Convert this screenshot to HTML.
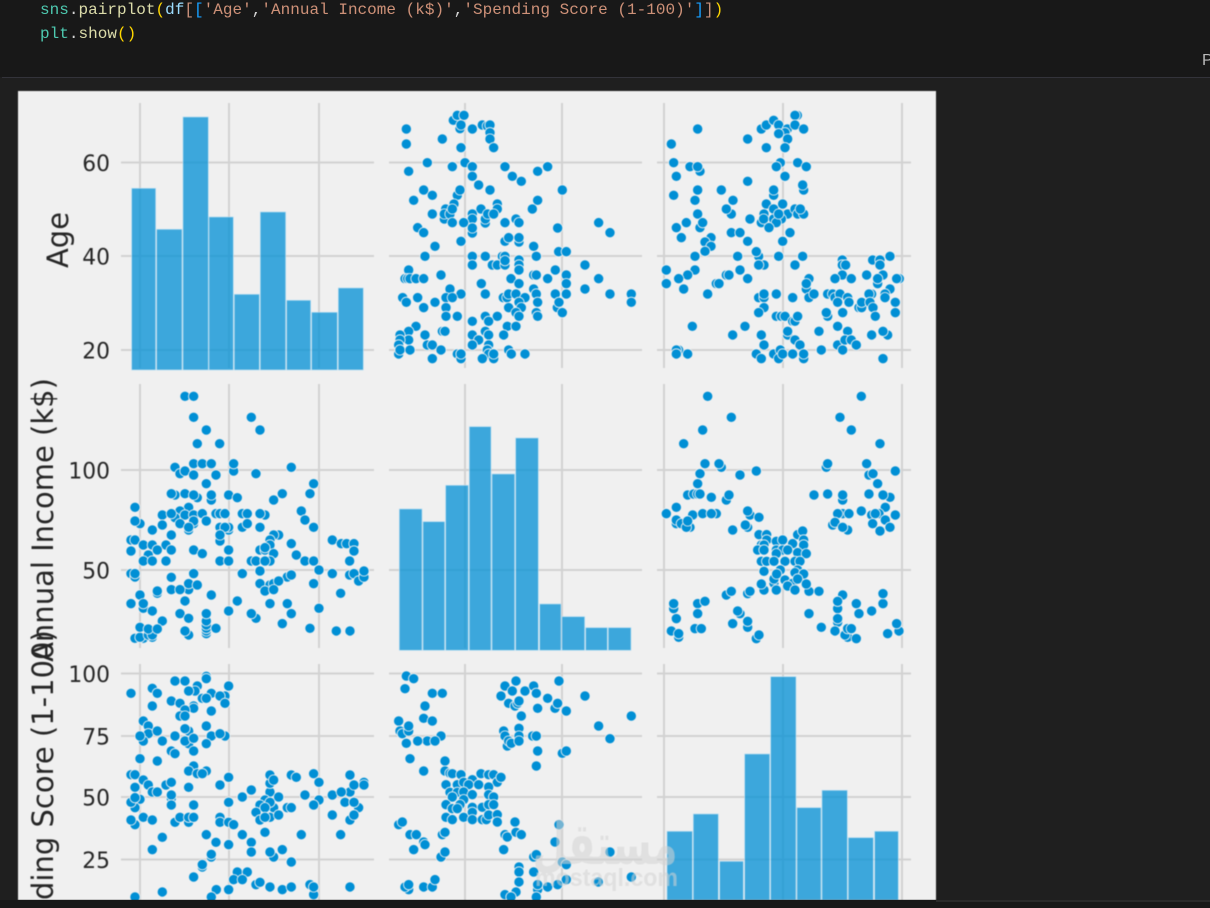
<!DOCTYPE html>
<html>
<head>
<meta charset="utf-8">
<style>
html,body{margin:0;padding:0;width:1210px;height:908px;overflow:hidden;background:#1f1f1f}
#top{position:absolute;left:0;top:0;width:1210px;height:77px;background:#181818}
#rule{position:absolute;left:2px;top:77px;width:1208px;height:1px;background:#33333a}
pre{position:absolute;left:40px;margin:0;font:16px/24px "Liberation Mono",monospace;letter-spacing:.02px;color:#d4d4d4;white-space:pre}
.t{color:#4ec9b0}.f{color:#dcdcaa}.g{color:#ffd700}.v{color:#9cdcfe}.s{color:#ce9178}.o{color:#c9907a}.b{color:#179fff}
#p{position:absolute;left:1202px;top:52px;width:8px;height:20px;overflow:hidden;font:16px "Liberation Sans",sans-serif;color:#bbb}
#bottom{position:absolute;left:0;top:900px;width:1210px;height:8px;background:#181818}
#line{position:absolute;left:936px;top:900px;width:274px;height:2px;background:#2a2a2a}
svg{position:absolute;left:0;top:0;filter:blur(.45px)}
circle{r:15.4px;fill:#008fd5;stroke:#f0f0f0;stroke-width:2.5px}
.lab{font-family:"DejaVu Sans",sans-serif;fill:#262626}
.tick{font-size:21.8px;text-anchor:end}
.yl{font-size:29px;text-anchor:middle}
.grid line{stroke:#d2d2d2;stroke-width:2}
.hist rect{fill:rgba(0,143,213,.75);stroke:#b5dcf1;stroke-width:2}
</style>
</head>
<body>
<div id="top"></div>
<div id="rule"></div>
<pre style="top:-2px"><span class="t">sns</span>.<span class="f">pairplot</span><span class="g">(</span><span class="v">df</span><span class="o">[</span><span class="b">[</span><span class="s">'Age'</span>,<span class="s">'Annual Income (k$)'</span>,<span class="s">'Spending Score (1-100)'</span><span class="b">]</span><span class="o">]</span><span class="g">)</span></pre>
<pre style="top:22px"><span class="t">plt</span>.<span class="f">show</span><span class="g">()</span></pre>
<div id="p">P</div>
<svg width="1210" height="908" viewBox="0 0 1210 908" xmlns="http://www.w3.org/2000/svg">
<defs><clipPath id="fc"><rect x="18" y="91" width="918" height="809"/></clipPath></defs>
<g clip-path="url(#fc)">
<rect x="18" y="91" width="918" height="809" fill="#f0f0f0"/>
<g class="grid">
<line x1="121" x2="374" y1="162.500" y2="162.500"/><line x1="121" x2="374" y1="256" y2="256"/><line x1="121" x2="374" y1="350" y2="350"/>
<line x1="389" x2="642" y1="162.500" y2="162.500"/><line x1="389" x2="642" y1="256" y2="256"/><line x1="389" x2="642" y1="350" y2="350"/>
<line x1="657" x2="911" y1="162.500" y2="162.500"/><line x1="657" x2="911" y1="256" y2="256"/><line x1="657" x2="911" y1="350" y2="350"/>
<line x1="121" x2="374" y1="470" y2="470"/><line x1="121" x2="374" y1="570" y2="570"/>
<line x1="389" x2="642" y1="470" y2="470"/><line x1="389" x2="642" y1="570" y2="570"/>
<line x1="657" x2="911" y1="470" y2="470"/><line x1="657" x2="911" y1="570" y2="570"/>
<line x1="121" x2="374" y1="673.500" y2="673.500"/><line x1="121" x2="374" y1="736" y2="736"/><line x1="121" x2="374" y1="797" y2="797"/><line x1="121" x2="374" y1="859.500" y2="859.500"/>
<line x1="389" x2="642" y1="673.500" y2="673.500"/><line x1="389" x2="642" y1="736" y2="736"/><line x1="389" x2="642" y1="797" y2="797"/><line x1="389" x2="642" y1="859.500" y2="859.500"/>
<line x1="657" x2="911" y1="673.500" y2="673.500"/><line x1="657" x2="911" y1="736" y2="736"/><line x1="657" x2="911" y1="797" y2="797"/><line x1="657" x2="911" y1="859.500" y2="859.500"/>
<line y1="103" y2="368" x1="140" x2="140"/><line y1="103" y2="368" x1="229" x2="229"/><line y1="103" y2="368" x1="319" x2="319"/>
<line y1="103" y2="368" x1="465" x2="465"/><line y1="103" y2="368" x1="562" x2="562"/>
<line y1="103" y2="368" x1="664" x2="664"/><line y1="103" y2="368" x1="783" x2="783"/><line y1="103" y2="368" x1="902" x2="902"/>
<line y1="384" y2="648" x1="140" x2="140"/><line y1="384" y2="648" x1="229" x2="229"/><line y1="384" y2="648" x1="319" x2="319"/>
<line y1="384" y2="648" x1="465" x2="465"/><line y1="384" y2="648" x1="562" x2="562"/>
<line y1="384" y2="648" x1="664" x2="664"/><line y1="384" y2="648" x1="783" x2="783"/><line y1="384" y2="648" x1="902" x2="902"/>
<line y1="664" y2="900" x1="140" x2="140"/><line y1="664" y2="900" x1="229" x2="229"/><line y1="664" y2="900" x1="319" x2="319"/>
<line y1="664" y2="900" x1="465" x2="465"/><line y1="664" y2="900" x1="562" x2="562"/>
<line y1="664" y2="900" x1="664" x2="664"/><line y1="664" y2="900" x1="783" x2="783"/><line y1="664" y2="900" x1="902" x2="902"/>
</g>

<g class="hist" transform="scale(.3333)">
<rect x="395" y="565" width="72" height="545"/><rect x="470" y="688" width="76" height="422"/><rect x="549" y="351" width="76" height="759"/><rect x="627" y="651" width="73" height="459"/><rect x="703" y="883" width="75" height="227"/><rect x="781" y="636" width="76" height="474"/><rect x="860" y="901" width="72" height="209"/><rect x="935" y="937" width="77" height="173"/><rect x="1015" y="864" width="75" height="246"/>
</g>
<g class="hist" transform="translate(380 380) scale(.3333)">
<rect x="58" y="387" width="68" height="424"/><rect x="129" y="425" width="65" height="386"/><rect x="197" y="316" width="68" height="495"/><rect x="268" y="140" width="65" height="671"/><rect x="336" y="282" width="68" height="529"/><rect x="407" y="174" width="68" height="637"/><rect x="479" y="672" width="64" height="139"/><rect x="546" y="710" width="68" height="101"/><rect x="617" y="743" width="65" height="68"/><rect x="685" y="743" width="68" height="68"/>
</g>
<g class="hist" transform="translate(650 655) scale(.3333)">
<rect x="51" y="529" width="76" height="206"/><rect x="130" y="477" width="75" height="258"/><rect x="209" y="619" width="71" height="116"/><rect x="284" y="297" width="75" height="438"/><rect x="362" y="65" width="76" height="670"/><rect x="441" y="458" width="72" height="277"/><rect x="516" y="406" width="76" height="329"/><rect x="595" y="548" width="75" height="187"/><rect x="674" y="529" width="71" height="206"/>
</g>

<g transform="translate(380 90) scale(.3333)">
<circle cx=220 cy=91 /><circle cx=232 cy=76 /><circle cx=240 cy=116 /><circle cx=243 cy=105 /><circle cx=252 cy=76 /><circle cx=79 cy=117 /><circle cx=79 cy=162 /><circle cx=187 cy=147 /><circle cx=243 cy=173 /><circle cx=277 cy=117 /><circle cx=307 cy=105 /><circle cx=322 cy=108 /><circle cx=330 cy=105 /><circle cx=330 cy=128 /><circle cx=330 cy=147 /><circle cx=341 cy=173 /><circle cx=142 cy=218 /><circle cx=217 cy=230 /><circle cx=86 cy=244 /><circle cx=255 cy=218 /><circle cx=277 cy=230 /><circle cx=375 cy=230 /><circle cx=473 cy=244 /><circle cx=503 cy=230 /><circle cx=277 cy=259 /><circle cx=397 cy=259 /><circle cx=424 cy=274 /><circle cx=296 cy=285 /><circle cx=330 cy=300 /><circle cx=547 cy=300 /><circle cx=131 cy=300 /><circle cx=157 cy=316 /><circle cx=232 cy=316 /><circle cx=240 cy=300 /><circle cx=101 cy=331 /><circle cx=473 cy=331 /><circle cx=222 cy=342 /><circle cx=352 cy=342 /><circle cx=352 cy=357 /><circle cx=303 cy=357 /><circle cx=457 cy=357 /><circle cx=197 cy=357 /><circle cx=193 cy=387 /><circle cx=193 cy=372 /><circle cx=210 cy=372 /><circle cx=217 cy=357 /><circle cx=157 cy=372 /><circle cx=277 cy=372 /><circle cx=277 cy=387 /><circle cx=316 cy=399 /><circle cx=316 cy=387 /><circle cx=323 cy=372 /><circle cx=341 cy=372 /><circle cx=217 cy=398 /><circle cx=251 cy=398 /><circle cx=375 cy=398 /><circle cx=408 cy=387 /><circle cx=417 cy=398 /><circle cx=277 cy=429 /><circle cx=277 cy=414 /><circle cx=113 cy=413 /><circle cx=131 cy=428 /><circle cx=533 cy=414 /><circle cx=656 cy=398 /><circle cx=690 cy=428 /><circle cx=243 cy=454 /><circle cx=375 cy=454 /><circle cx=386 cy=443 /><circle cx=417 cy=456 /><circle cx=417 cy=443 /><circle cx=165 cy=469 /><circle cx=461 cy=469 /><circle cx=135 cy=499 /><circle cx=277 cy=499 /><circle cx=316 cy=499 /><circle cx=367 cy=499 /><circle cx=375 cy=499 /><circle cx=469 cy=499 /><circle cx=536 cy=485 /><circle cx=559 cy=485 /><circle cx=277 cy=525 /><circle cx=337 cy=525 /><circle cx=352 cy=525 /><circle cx=375 cy=525 /><circle cx=375 cy=512 /><circle cx=417 cy=510 /><circle cx=417 cy=525 /><circle cx=417 cy=540 /><circle cx=615 cy=525 /><circle cx=526 cy=540 /><circle cx=86 cy=540 /><circle cx=75 cy=566 /><circle cx=83 cy=566 /><circle cx=90 cy=566 /><circle cx=108 cy=566 /><circle cx=131 cy=566 /><circle cx=183 cy=555 /><circle cx=393 cy=566 /><circle cx=461 cy=555 /><circle cx=469 cy=555 /><circle cx=503 cy=566 /><circle cx=559 cy=555 /><circle cx=559 cy=581 /><circle cx=656 cy=566 /><circle cx=304 cy=581 /><circle cx=417 cy=581 /><circle cx=210 cy=597 /><circle cx=461 cy=597 /><circle cx=615 cy=597 /><circle cx=243 cy=612 /><circle cx=316 cy=612 /><circle cx=198 cy=623 /><circle cx=217 cy=623 /><circle cx=68 cy=623 /><circle cx=79 cy=637 /><circle cx=113 cy=623 /><circle cx=165 cy=637 /><circle cx=131 cy=653 /><circle cx=198 cy=653 /><circle cx=370 cy=623 /><circle cx=381 cy=623 /><circle cx=386 cy=612 /><circle cx=408 cy=612 /><circle cx=435 cy=623 /><circle cx=469 cy=612 /><circle cx=526 cy=612 /><circle cx=559 cy=612 /><circle cx=690 cy=612 /><circle cx=754 cy=612 /><circle cx=754 cy=637 /><circle cx=473 cy=637 /><circle cx=532 cy=653 /><circle cx=537 cy=637 /><circle cx=547 cy=668 /><circle cx=417 cy=637 /><circle cx=386 cy=653 /><circle cx=424 cy=653 /><circle cx=408 cy=668 /><circle cx=417 cy=679 /><circle cx=469 cy=668 /><circle cx=473 cy=679 /><circle cx=198 cy=679 /><circle cx=232 cy=679 /><circle cx=316 cy=679 /><circle cx=352 cy=679 /><circle cx=326 cy=694 /><circle cx=277 cy=694 /><circle cx=108 cy=709 /><circle cx=382 cy=709 /><circle cx=408 cy=709 /><circle cx=86 cy=724 /><circle cx=187 cy=724 /><circle cx=195 cy=724 /><circle cx=316 cy=724 /><circle cx=60 cy=735 /><circle cx=135 cy=735 /><circle cx=277 cy=735 /><circle cx=326 cy=735 /><circle cx=371 cy=735 /><circle cx=86 cy=750 /><circle cx=296 cy=750 /><circle cx=60 cy=750 /><circle cx=56 cy=765 /><circle cx=142 cy=765 /><circle cx=157 cy=765 /><circle cx=277 cy=765 /><circle cx=326 cy=765 /><circle cx=56 cy=792 /><circle cx=60 cy=780 /><circle cx=90 cy=780 /><circle cx=183 cy=780 /><circle cx=386 cy=780 /><circle cx=322 cy=780 /><circle cx=232 cy=792 /><circle cx=243 cy=806 /><circle cx=243 cy=792 /><circle cx=394 cy=792 /><circle cx=435 cy=792 /><circle cx=326 cy=792 /><circle cx=341 cy=806 /><circle cx=341 cy=792 /><circle cx=157 cy=806 /><circle cx=307 cy=806 />
</g>

<g transform="translate(650 90) scale(.3333)">
<circle cx=143 cy=117 /><circle cx=64 cy=162 /><circle cx=293 cy=147 /><circle cx=334 cy=117 /><circle cx=349 cy=105 /><circle cx=371 cy=91 /><circle cx=386 cy=105 /><circle cx=412 cy=117 /><circle cx=405 cy=128 /><circle cx=386 cy=131 /><circle cx=413 cy=147 /><circle cx=442 cy=76 /><circle cx=435 cy=76 /><circle cx=435 cy=105 /><circle cx=461 cy=117 /><circle cx=349 cy=173 /><circle cx=405 cy=173 /><circle cx=71 cy=218 /><circle cx=120 cy=230 /><circle cx=150 cy=244 /><circle cx=143 cy=230 /><circle cx=79 cy=259 /><circle cx=391 cy=218 /><circle cx=379 cy=230 /><circle cx=443 cy=218 /><circle cx=469 cy=230 /><circle cx=405 cy=259 /><circle cx=293 cy=274 /><circle cx=461 cy=300 /><circle cx=458 cy=285 /><circle cx=143 cy=300 /><circle cx=214 cy=300 /><circle cx=71 cy=316 /><circle cx=135 cy=331 /><circle cx=249 cy=331 /><circle cx=371 cy=316 /><circle cx=371 cy=300 /><circle cx=349 cy=342 /><circle cx=398 cy=342 /><circle cx=244 cy=372 /><circle cx=229 cy=357 /><circle cx=143 cy=372 /><circle cx=342 cy=372 /><circle cx=371 cy=357 /><circle cx=413 cy=372 /><circle cx=435 cy=357 /><circle cx=443 cy=372 /><circle cx=461 cy=372 /><circle cx=451 cy=357 /><circle cx=300 cy=387 /><circle cx=334 cy=398 /><circle cx=341 cy=387 /><circle cx=371 cy=387 /><circle cx=394 cy=387 /><circle cx=379 cy=398 /><circle cx=386 cy=372 /><circle cx=357 cy=413 /><circle cx=150 cy=413 /><circle cx=158 cy=398 /><circle cx=109 cy=398 /><circle cx=79 cy=413 /><circle cx=94 cy=443 /><circle cx=244 cy=428 /><circle cx=270 cy=428 /><circle cx=420 cy=428 /><circle cx=183 cy=443 /><circle cx=165 cy=456 /><circle cx=183 cy=469 /><circle cx=165 cy=484 /><circle cx=293 cy=454 /><circle cx=398 cy=454 /><circle cx=135 cy=499 /><circle cx=263 cy=499 /><circle cx=326 cy=499 /><circle cx=319 cy=485 /><circle cx=386 cy=499 /><circle cx=458 cy=499 /><circle cx=342 cy=525 /><circle cx=326 cy=525 /><circle cx=435 cy=525 /><circle cx=577 cy=510 /><circle cx=577 cy=525 /><circle cx=587 cy=525 /><circle cx=668 cy=510 /><circle cx=690 cy=510 /><circle cx=690 cy=525 /><circle cx=720 cy=499 /><circle cx=49 cy=540 /><circle cx=135 cy=540 /><circle cx=270 cy=540 /><circle cx=113 cy=555 /><circle cx=86 cy=566 /><circle cx=229 cy=555 /><circle cx=237 cy=555 /><circle cx=293 cy=566 /><circle cx=577 cy=555 /><circle cx=555 cy=566 /><circle cx=604 cy=566 /><circle cx=650 cy=555 /><circle cx=699 cy=555 /><circle cx=683 cy=581 /><circle cx=683 cy=566 /><circle cx=748 cy=566 /><circle cx=740 cy=566 /><circle cx=477 cy=566 /><circle cx=469 cy=597 /><circle cx=469 cy=581 /><circle cx=49 cy=581 /><circle cx=101 cy=597 /><circle cx=199 cy=581 /><circle cx=207 cy=581 /><circle cx=173 cy=612 /><circle cx=326 cy=623 /><circle cx=342 cy=623 /><circle cx=342 cy=612 /><circle cx=379 cy=612 /><circle cx=428 cy=623 /><circle cx=477 cy=623 /><circle cx=492 cy=612 /><circle cx=533 cy=612 /><circle cx=548 cy=612 /><circle cx=555 cy=623 /><circle cx=570 cy=612 /><circle cx=563 cy=637 /><circle cx=593 cy=623 /><circle cx=597 cy=637 /><circle cx=665 cy=612 /><circle cx=657 cy=612 /><circle cx=720 cy=597 /><circle cx=705 cy=612 /><circle cx=705 cy=623 /><circle cx=736 cy=637 /><circle cx=627 cy=653 /><circle cx=635 cy=653 /><circle cx=635 cy=637 /><circle cx=660 cy=637 /><circle cx=669 cy=653 /><circle cx=342 cy=653 /><circle cx=326 cy=668 /><circle cx=379 cy=679 /><circle cx=394 cy=679 /><circle cx=405 cy=679 /><circle cx=428 cy=694 /><circle cx=435 cy=694 /><circle cx=443 cy=679 /><circle cx=533 cy=679 /><circle cx=529 cy=668 /><circle cx=578 cy=668 /><circle cx=676 cy=679 /><circle cx=736 cy=668 /><circle cx=127 cy=709 /><circle cx=285 cy=709 /><circle cx=413 cy=735 /><circle cx=413 cy=724 /><circle cx=507 cy=724 /><circle cx=563 cy=709 /><circle cx=593 cy=724 /><circle cx=713 cy=735 /><circle cx=699 cy=724 /><circle cx=665 cy=735 /><circle cx=248 cy=735 /><circle cx=334 cy=735 /><circle cx=435 cy=750 /><circle cx=450 cy=765 /><circle cx=342 cy=765 /><circle cx=563 cy=765 /><circle cx=585 cy=750 /><circle cx=604 cy=750 /><circle cx=619 cy=765 /><circle cx=514 cy=780 /><circle cx=578 cy=780 /><circle cx=86 cy=780 /><circle cx=79 cy=780 /><circle cx=79 cy=792 /><circle cx=113 cy=792 /><circle cx=319 cy=792 /><circle cx=371 cy=792 /><circle cx=391 cy=780 /><circle cx=386 cy=806 /><circle cx=398 cy=792 /><circle cx=334 cy=806 /><circle cx=428 cy=792 /><circle cx=461 cy=806 /><circle cx=461 cy=792 /><circle cx=699 cy=806 />
</g>

<g transform="translate(0 375) scale(.3333)">
<circle cx=555 cy=64 /><circle cx=581 cy=64 /><circle cx=581 cy=127 /><circle cx=754 cy=127 /><circle cx=619 cy=165 /><circle cx=780 cy=165 /><circle cx=592 cy=206 /><circle cx=659 cy=206 /><circle cx=525 cy=277 /><circle cx=540 cy=296 /><circle cx=555 cy=288 /><circle cx=581 cy=266 /><circle cx=607 cy=266 /><circle cx=634 cy=266 /><circle cx=581 cy=300 /><circle cx=648 cy=300 /><circle cx=701 cy=288 /><circle cx=701 cy=266 /><circle cx=768 cy=296 /><circle cx=874 cy=277 /><circle cx=619 cy=326 /><circle cx=941 cy=326 /><circle cx=525 cy=360 /><circle cx=514 cy=356 /><circle cx=555 cy=356 /><circle cx=592 cy=368 /><circle cx=581 cy=360 /><circle cx=634 cy=375 /><circle cx=634 cy=360 /><circle cx=686 cy=360 /><circle cx=712 cy=368 /><circle cx=821 cy=375 /><circle cx=847 cy=356 /><circle cx=930 cy=356 /><circle cx=405 cy=397 /><circle cx=566 cy=397 /><circle cx=540 cy=408 /><circle cx=904 cy=408 /><circle cx=487 cy=420 /><circle cx=525 cy=428 /><circle cx=514 cy=416 /><circle cx=555 cy=420 /><circle cx=581 cy=420 /><circle cx=607 cy=416 /><circle cx=648 cy=416 /><circle cx=660 cy=416 /><circle cx=675 cy=416 /><circle cx=727 cy=416 /><circle cx=742 cy=416 /><circle cx=795 cy=420 /><circle cx=780 cy=416 /><circle cx=420 cy=446 /><circle cx=405 cy=438 /><circle cx=487 cy=450 /><circle cx=540 cy=446 /><circle cx=581 cy=446 /><circle cx=581 cy=438 /><circle cx=619 cy=438 /><circle cx=727 cy=457 /><circle cx=742 cy=446 /><circle cx=915 cy=435 /><circle cx=941 cy=457 /><circle cx=566 cy=465 /><circle cx=566 cy=457 /><circle cx=457 cy=465 /><circle cx=660 cy=457 /><circle cx=686 cy=465 /><circle cx=686 cy=457 /><circle cx=675 cy=457 /><circle cx=780 cy=457 /><circle cx=514 cy=480 /><circle cx=660 cy=498 /><circle cx=660 cy=480 /><circle cx=836 cy=480 /><circle cx=821 cy=480 /><circle cx=810 cy=495 /><circle cx=393 cy=495 /><circle cx=405 cy=495 /><circle cx=997 cy=495 /><circle cx=1024 cy=506 /><circle cx=1040 cy=506 /><circle cx=1062 cy=506 /><circle cx=430 cy=510 /><circle cx=457 cy=510 /><circle cx=498 cy=510 /><circle cx=810 cy=510 /><circle cx=874 cy=506 /><circle cx=393 cy=528 /><circle cx=472 cy=525 /><circle cx=514 cy=525 /><circle cx=581 cy=525 /><circle cx=686 cy=525 /><circle cx=780 cy=525 /><circle cx=795 cy=525 /><circle cx=795 cy=518 /><circle cx=445 cy=540 /><circle cx=607 cy=536 /><circle cx=821 cy=536 /><circle cx=889 cy=540 /><circle cx=1062 cy=528 /><circle cx=430 cy=558 /><circle cx=457 cy=558 /><circle cx=498 cy=558 /><circle cx=660 cy=558 /><circle cx=686 cy=558 /><circle cx=754 cy=558 /><circle cx=768 cy=558 /><circle cx=810 cy=558 /><circle cx=795 cy=558 /><circle cx=915 cy=558 /><circle cx=941 cy=558 /><circle cx=1049 cy=558 /><circle cx=780 cy=588 /><circle cx=957 cy=585 /><circle cx=393 cy=596 /><circle cx=405 cy=606 /><circle cx=405 cy=596 /><circle cx=581 cy=596 /><circle cx=727 cy=596 /><circle cx=997 cy=596 /><circle cx=1049 cy=600 /><circle cx=1062 cy=596 /><circle cx=1076 cy=618 /><circle cx=1092 cy=606 /><circle cx=1092 cy=588 /><circle cx=862 cy=606 /><circle cx=874 cy=600 /><circle cx=514 cy=607 /><circle cx=566 cy=644 /><circle cx=566 cy=626 /><circle cx=592 cy=630 /><circle cx=780 cy=626 /><circle cx=810 cy=630 /><circle cx=821 cy=626 /><circle cx=836 cy=618 /><circle cx=941 cy=626 /><circle cx=472 cy=655 /><circle cx=472 cy=648 /><circle cx=514 cy=644 /><circle cx=540 cy=644 /><circle cx=795 cy=648 /><circle cx=821 cy=644 /><circle cx=420 cy=660 /><circle cx=634 cy=660 /><circle cx=1022 cy=655 /><circle cx=555 cy=678 /><circle cx=712 cy=678 /><circle cx=393 cy=686 /><circle cx=430 cy=700 /><circle cx=430 cy=686 /><circle cx=810 cy=686 /><circle cx=862 cy=686 /><circle cx=457 cy=708 /><circle cx=540 cy=716 /><circle cx=686 cy=708 /><circle cx=768 cy=730 /><circle cx=754 cy=716 /><circle cx=874 cy=716 /><circle cx=957 cy=700 /><circle cx=566 cy=730 /><circle cx=619 cy=776 /><circle cx=619 cy=768 /><circle cx=619 cy=760 /><circle cx=619 cy=750 /><circle cx=619 cy=738 /><circle cx=619 cy=716 /><circle cx=487 cy=738 /><circle cx=648 cy=760 /><circle cx=847 cy=746 /><circle cx=930 cy=760 /><circle cx=1009 cy=768 /><circle cx=1050 cy=768 /><circle cx=405 cy=790 /><circle cx=430 cy=790 /><circle cx=420 cy=787 /><circle cx=457 cy=787 /><circle cx=445 cy=780 /><circle cx=457 cy=780 /><circle cx=420 cy=757 /><circle cx=445 cy=762 /><circle cx=472 cy=762 /><circle cx=566 cy=780 /><circle cx=555 cy=768 />
</g>

<g transform="translate(650 380) scale(.3333)">
<circle cx=173 cy=49 /><circle cx=634 cy=49 /><circle cx=244 cy=112 /><circle cx=570 cy=112 /><circle cx=158 cy=150 /><circle cx=604 cy=150 /><circle cx=101 cy=191 /><circle cx=690 cy=191 /><circle cx=165 cy=251 /><circle cx=214 cy=262 /><circle cx=207 cy=251 /><circle cx=529 cy=262 /><circle cx=533 cy=251 /><circle cx=650 cy=251 /><circle cx=319 cy=273 /><circle cx=736 cy=273 /><circle cx=270 cy=285 /><circle cx=150 cy=281 /><circle cx=143 cy=311 /><circle cx=657 cy=285 /><circle cx=669 cy=281 /><circle cx=683 cy=311 /><circle cx=113 cy=345 /><circle cx=131 cy=342 /><circle cx=143 cy=342 /><circle cx=150 cy=342 /><circle cx=184 cy=352 /><circle cx=229 cy=360 /><circle cx=237 cy=345 /><circle cx=492 cy=345 /><circle cx=533 cy=342 /><circle cx=578 cy=360 /><circle cx=578 cy=345 /><circle cx=657 cy=342 /><circle cx=720 cy=352 /><circle cx=699 cy=345 /><circle cx=706 cy=382 /><circle cx=79 cy=382 /><circle cx=49 cy=401 /><circle cx=128 cy=405 /><circle cx=158 cy=401 /><circle cx=199 cy=401 /><circle cx=184 cy=401 /><circle cx=300 cy=405 /><circle cx=293 cy=393 /><circle cx=327 cy=412 /><circle cx=578 cy=401 /><circle cx=563 cy=401 /><circle cx=597 cy=401 /><circle cx=634 cy=393 /><circle cx=687 cy=401 /><circle cx=665 cy=405 /><circle cx=676 cy=401 /><circle cx=736 cy=405 /><circle cx=706 cy=420 /><circle cx=79 cy=431 /><circle cx=79 cy=420 /><circle cx=94 cy=431 /><circle cx=120 cy=442 /><circle cx=109 cy=442 /><circle cx=113 cy=423 /><circle cx=293 cy=442 /><circle cx=286 cy=435 /><circle cx=548 cy=435 /><circle cx=555 cy=427 /><circle cx=593 cy=450 /><circle cx=578 cy=442 /><circle cx=668 cy=431 /><circle cx=720 cy=442 /><circle cx=690 cy=453 /><circle cx=248 cy=450 /><circle cx=327 cy=464 /><circle cx=350 cy=464 /><circle cx=443 cy=464 /><circle cx=458 cy=453 /><circle cx=350 cy=480 /><circle cx=379 cy=484 /><circle cx=398 cy=480 /><circle cx=428 cy=491 /><circle cx=461 cy=480 /><circle cx=334 cy=495 /><circle cx=342 cy=495 /><circle cx=461 cy=495 /><circle cx=323 cy=510 /><circle cx=342 cy=510 /><circle cx=379 cy=510 /><circle cx=398 cy=510 /><circle cx=413 cy=510 /><circle cx=379 cy=521 /><circle cx=443 cy=518 /><circle cx=469 cy=521 /><circle cx=334 cy=544 /><circle cx=350 cy=544 /><circle cx=372 cy=544 /><circle cx=405 cy=544 /><circle cx=435 cy=544 /><circle cx=450 cy=544 /><circle cx=342 cy=574 /><circle cx=391 cy=570 /><circle cx=443 cy=570 /><circle cx=372 cy=610 /><circle cx=372 cy=597 /><circle cx=380 cy=582 /><circle cx=435 cy=578 /><circle cx=461 cy=582 /><circle cx=405 cy=600 /><circle cx=428 cy=610 /><circle cx=443 cy=597 /><circle cx=342 cy=630 /><circle cx=334 cy=612 /><circle cx=477 cy=634 /><circle cx=469 cy=612 /><circle cx=379 cy=630 /><circle cx=413 cy=618 /><circle cx=435 cy=630 /><circle cx=507 cy=634 /><circle cx=229 cy=645 /><circle cx=244 cy=634 /><circle cx=293 cy=641 /><circle cx=300 cy=634 /><circle cx=143 cy=671 /><circle cx=165 cy=664 /><circle cx=71 cy=686 /><circle cx=71 cy=671 /><circle cx=143 cy=701 /><circle cx=578 cy=645 /><circle cx=563 cy=686 /><circle cx=563 cy=664 /><circle cx=619 cy=671 /><circle cx=699 cy=671 /><circle cx=699 cy=641 /><circle cx=665 cy=693 /><circle cx=627 cy=701 /><circle cx=270 cy=701 /><circle cx=263 cy=693 /><circle cx=477 cy=701 /><circle cx=79 cy=716 /><circle cx=563 cy=727 /><circle cx=563 cy=716 /><circle cx=248 cy=731 /><circle cx=293 cy=742 /><circle cx=293 cy=724 /><circle cx=143 cy=746 /><circle cx=135 cy=746 /><circle cx=154 cy=746 /><circle cx=64 cy=753 /><circle cx=86 cy=772 /><circle cx=86 cy=761 /><circle cx=319 cy=776 /><circle cx=327 cy=765 /><circle cx=514 cy=742 /><circle cx=555 cy=753 /><circle cx=593 cy=772 /><circle cx=585 cy=765 /><circle cx=593 cy=746 /><circle cx=604 cy=746 /><circle cx=619 cy=776 /><circle cx=713 cy=761 /><circle cx=747 cy=753 /><circle cx=740 cy=731 />
</g>

<g transform="translate(0 655) scale(.3333)">
<circle cx=393 cy=115 /><circle cx=457 cy=100 /><circle cx=472 cy=115 /><circle cx=525 cy=78 /><circle cx=555 cy=78 /><circle cx=619 cy=64 /><circle cx=619 cy=71 /><circle cx=592 cy=93 /><circle cx=585 cy=108 /><circle cx=566 cy=108 /><circle cx=634 cy=115 /><circle cx=675 cy=123 /><circle cx=660 cy=123 /><circle cx=686 cy=93 /><circle cx=607 cy=130 /><circle cx=619 cy=130 /><circle cx=514 cy=138 /><circle cx=540 cy=145 /><circle cx=457 cy=153 /><circle cx=581 cy=153 /><circle cx=581 cy=160 /><circle cx=555 cy=165 /><circle cx=675 cy=145 /><circle cx=634 cy=168 /><circle cx=540 cy=183 /><circle cx=555 cy=183 /><circle cx=430 cy=198 /><circle cx=445 cy=213 /><circle cx=619 cy=213 /><circle cx=566 cy=228 /><circle cx=555 cy=221 /><circle cx=445 cy=236 /><circle cx=472 cy=228 /><circle cx=430 cy=258 /><circle cx=420 cy=243 /><circle cx=525 cy=243 /><circle cx=634 cy=243 /><circle cx=675 cy=243 /><circle cx=660 cy=236 /><circle cx=487 cy=258 /><circle cx=566 cy=266 /><circle cx=555 cy=258 /><circle cx=581 cy=250 /><circle cx=619 cy=266 /><circle cx=514 cy=288 /><circle cx=525 cy=296 /><circle cx=581 cy=288 /><circle cx=420 cy=311 /><circle cx=472 cy=318 /><circle cx=581 cy=333 /><circle cx=566 cy=348 /><circle cx=619 cy=348 /><circle cx=592 cy=356 /><circle cx=607 cy=356 /><circle cx=393 cy=359 /><circle cx=405 cy=359 /><circle cx=686 cy=367 /><circle cx=430 cy=375 /><circle cx=445 cy=390 /><circle cx=498 cy=390 /><circle cx=514 cy=382 /><circle cx=660 cy=390 /><circle cx=405 cy=397 /><circle cx=566 cy=397 /><circle cx=754 cy=405 /><circle cx=810 cy=411 /><circle cx=836 cy=426 /><circle cx=457 cy=411 /><circle cx=472 cy=411 /><circle cx=514 cy=430 /><circle cx=514 cy=420 /><circle cx=420 cy=433 /><circle cx=405 cy=458 /><circle cx=393 cy=442 /><circle cx=405 cy=428 /><circle cx=514 cy=450 /><circle cx=581 cy=450 /><circle cx=686 cy=442 /><circle cx=727 cy=426 /><circle cx=795 cy=435 /><circle cx=780 cy=450 /><circle cx=821 cy=458 /><circle cx=810 cy=442 /><circle cx=768 cy=472 /><circle cx=795 cy=458 /><circle cx=862 cy=458 /><circle cx=874 cy=458 /><circle cx=915 cy=420 /><circle cx=941 cy=356 /><circle cx=957 cy=382 /><circle cx=874 cy=360 /><circle cx=889 cy=367 /><circle cx=810 cy=385 /><circle cx=810 cy=360 /><circle cx=821 cy=375 /><circle cx=997 cy=420 /><circle cx=1050 cy=411 /><circle cx=1024 cy=411 /><circle cx=1062 cy=390 /><circle cx=1050 cy=360 /><circle cx=1092 cy=382 /><circle cx=1092 cy=390 /><circle cx=957 cy=435 /><circle cx=941 cy=450 /><circle cx=1035 cy=442 /><circle cx=1076 cy=458 /><circle cx=1062 cy=442 /><circle cx=1050 cy=495 /><circle cx=1062 cy=480 /><circle cx=997 cy=480 /><circle cx=405 cy=509 /><circle cx=393 cy=495 /><circle cx=430 cy=487 /><circle cx=457 cy=495 /><circle cx=525 cy=502 /><circle cx=540 cy=487 /><circle cx=566 cy=502 /><circle cx=566 cy=487 /><circle cx=581 cy=487 /><circle cx=660 cy=487 /><circle cx=660 cy=502 /><circle cx=686 cy=502 /><circle cx=701 cy=509 /><circle cx=780 cy=495 /><circle cx=810 cy=487 /><circle cx=795 cy=487 /><circle cx=836 cy=480 /><circle cx=795 cy=532 /><circle cx=727 cy=539 /><circle cx=619 cy=539 /><circle cx=648 cy=562 /><circle cx=686 cy=569 /><circle cx=754 cy=562 /><circle cx=754 cy=591 /><circle cx=821 cy=606 /><circle cx=810 cy=591 /><circle cx=847 cy=584 /><circle cx=874 cy=621 /><circle cx=904 cy=539 /><circle cx=1022 cy=539 /><circle cx=487 cy=547 /><circle cx=457 cy=584 /><circle cx=634 cy=606 /><circle cx=634 cy=598 /><circle cx=607 cy=636 /><circle cx=607 cy=629 /><circle cx=581 cy=666 /><circle cx=712 cy=651 /><circle cx=742 cy=651 /><circle cx=701 cy=674 /><circle cx=727 cy=674 /><circle cx=768 cy=689 /><circle cx=780 cy=682 /><circle cx=810 cy=696 /><circle cx=847 cy=704 /><circle cx=874 cy=696 /><circle cx=930 cy=689 /><circle cx=941 cy=719 /><circle cx=941 cy=696 /><circle cx=1050 cy=696 /><circle cx=649 cy=704 /><circle cx=686 cy=704 /><circle cx=634 cy=726 /><circle cx=405 cy=726 /><circle cx=487 cy=711 />
</g>

<g transform="translate(380 655) scale(.3333)">
<circle cx=79 cy=63 /><circle cx=101 cy=71 /><circle cx=75 cy=101 /><circle cx=157 cy=115 /><circle cx=187 cy=115 /><circle cx=135 cy=153 /><circle cx=131 cy=190 /><circle cx=157 cy=198 /><circle cx=56 cy=198 /><circle cx=60 cy=228 /><circle cx=67 cy=236 /><circle cx=86 cy=228 /><circle cx=86 cy=213 /><circle cx=183 cy=243 /><circle cx=142 cy=258 /><circle cx=165 cy=258 /><circle cx=113 cy=258 /><circle cx=79 cy=265 /><circle cx=90 cy=311 /><circle cx=131 cy=348 /><circle cx=195 cy=318 /><circle cx=195 cy=348 /><circle cx=210 cy=355 /><circle cx=217 cy=356 /><circle cx=243 cy=359 /><circle cx=198 cy=389 /><circle cx=232 cy=389 /><circle cx=251 cy=382 /><circle cx=277 cy=374 /><circle cx=266 cy=389 /><circle cx=303 cy=356 /><circle cx=296 cy=389 /><circle cx=326 cy=359 /><circle cx=341 cy=359 /><circle cx=352 cy=382 /><circle cx=363 cy=367 /><circle cx=326 cy=396 /><circle cx=210 cy=412 /><circle cx=232 cy=412 /><circle cx=251 cy=411 /><circle cx=277 cy=419 /><circle cx=217 cy=426 /><circle cx=326 cy=419 /><circle cx=341 cy=426 /><circle cx=251 cy=434 /><circle cx=198 cy=449 /><circle cx=240 cy=449 /><circle cx=277 cy=457 /><circle cx=307 cy=457 /><circle cx=326 cy=449 /><circle cx=341 cy=449 /><circle cx=217 cy=461 /><circle cx=232 cy=461 /><circle cx=198 cy=487 /><circle cx=217 cy=494 /><circle cx=251 cy=487 /><circle cx=277 cy=472 /><circle cx=277 cy=494 /><circle cx=307 cy=494 /><circle cx=319 cy=494 /><circle cx=326 cy=480 /><circle cx=352 cy=479 /><circle cx=352 cy=501 /><circle cx=56 cy=509 /><circle cx=67 cy=501 /><circle cx=405 cy=501 /><circle cx=90 cy=539 /><circle cx=109 cy=539 /><circle cx=187 cy=539 /><circle cx=195 cy=532 /><circle cx=131 cy=561 /><circle cx=135 cy=569 /><circle cx=101 cy=584 /><circle cx=183 cy=606 /><circle cx=195 cy=591 /><circle cx=375 cy=539 /><circle cx=382 cy=546 /><circle cx=408 cy=532 /><circle cx=424 cy=539 /><circle cx=371 cy=584 /><circle cx=375 cy=93 /><circle cx=408 cy=78 /><circle cx=397 cy=108 /><circle cx=435 cy=108 /><circle cx=461 cy=93 /><circle cx=469 cy=115 /><circle cx=363 cy=123 /><circle cx=386 cy=145 /><circle cx=405 cy=153 /><circle cx=413 cy=145 /><circle cx=417 cy=138 /><circle cx=473 cy=160 /><circle cx=424 cy=183 /><circle cx=503 cy=130 /><circle cx=537 cy=78 /><circle cx=615 cy=123 /><circle cx=525 cy=160 /><circle cx=533 cy=145 /><circle cx=559 cy=168 /><circle cx=754 cy=183 /><circle cx=656 cy=213 /><circle cx=690 cy=251 /><circle cx=371 cy=228 /><circle cx=375 cy=243 /><circle cx=382 cy=273 /><circle cx=386 cy=258 /><circle cx=394 cy=265 /><circle cx=417 cy=220 /><circle cx=417 cy=243 /><circle cx=417 cy=258 /><circle cx=458 cy=243 /><circle cx=469 cy=243 /><circle cx=473 cy=288 /><circle cx=547 cy=295 /><circle cx=559 cy=288 /><circle cx=469 cy=333 /><circle cx=537 cy=509 /><circle cx=525 cy=561 /><circle cx=461 cy=606 /><circle cx=469 cy=599 /><circle cx=690 cy=591 /><circle cx=547 cy=621 /><circle cx=559 cy=629 /><circle cx=417 cy=636 /><circle cx=417 cy=651 /><circle cx=417 cy=681 /><circle cx=461 cy=651 /><circle cx=559 cy=674 /><circle cx=655 cy=681 /><circle cx=754 cy=666 /><circle cx=473 cy=704 /><circle cx=473 cy=689 /><circle cx=533 cy=689 /><circle cx=503 cy=696 /><circle cx=408 cy=711 /><circle cx=375 cy=719 /><circle cx=393 cy=726 /><circle cx=469 cy=726 /><circle cx=86 cy=704 /><circle cx=75 cy=696 /><circle cx=86 cy=689 /><circle cx=131 cy=696 /><circle cx=157 cy=696 /><circle cx=165 cy=674 />
</g>

<g class="lab">
<text class="tick" x="110" y="171">60</text>
<text class="tick" x="110" y="264.500">40</text>
<text class="tick" x="110" y="358.500">20</text>
<text class="tick" x="110" y="478.500">100</text>
<text class="tick" x="110" y="578.500">50</text>
<text class="tick" x="110" y="682">100</text>
<text class="tick" x="110" y="744.500">75</text>
<text class="tick" x="110" y="805.500">50</text>
<text class="tick" x="110" y="868">25</text>
<text class="yl" transform="translate(68 240) rotate(-90)">Age</text>
<text class="yl" transform="translate(53 520) rotate(-90)">Annual Income (k$)</text>
<text class="yl" transform="translate(53 900) rotate(-90)" style="text-anchor:start">ding Score (1-100)</text>
</g>

<g opacity=".55" fill="#d3d3d3">
<text x="605" y="864" text-anchor="middle" font-family="'DejaVu Sans',sans-serif" font-weight="bold" font-size="58" direction="rtl" textLength="145" lengthAdjust="spacingAndGlyphs">مستقل</text>
<text x="535" y="886" font-family="'Liberation Sans',sans-serif" font-weight="bold" font-size="25" textLength="143" lengthAdjust="spacingAndGlyphs">mostaql.com</text>
</g>
</g>
</svg>
<div id="bottom"></div>
<div id="line"></div>
</body>
</html>
